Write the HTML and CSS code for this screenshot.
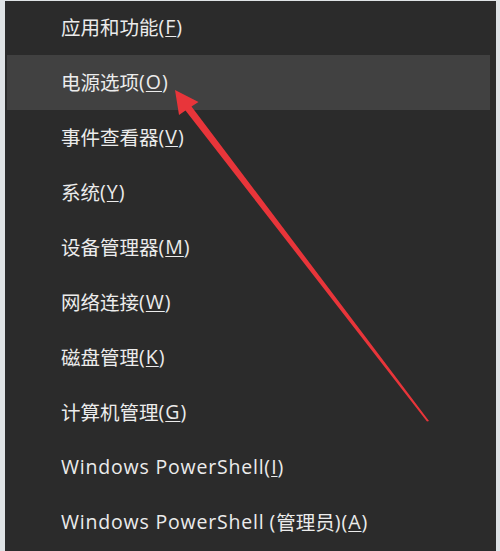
FILE: index.html
```html
<!DOCTYPE html>
<html lang="zh-CN">
<head>
<meta charset="utf-8">
<link rel="stylesheet" href="styles.css">
</head>
<body>
<div class="frame">
  <ul class="menu">
    <li class="item first">应用和功能<span class="k">(<u>F</u>)</span></li>
    <li class="item active">电源选项<span class="k">(<u>O</u>)</span></li>
    <li class="item">事件查看器<span class="k">(<u>V</u>)</span></li>
    <li class="item">系统<span class="k">(<u>Y</u>)</span></li>
    <li class="item">设备管理器<span class="k">(<u>M</u>)</span></li>
    <li class="item">网络连接<span class="k">(<u>W</u>)</span></li>
    <li class="item">磁盘管理<span class="k">(<u>K</u>)</span></li>
    <li class="item">计算机管理<span class="k">(<u>G</u>)</span></li>
    <li class="item"><span class="en">Windows PowerShell</span><span class="k">(<u>I</u>)</span></li>
    <li class="item"><span class="en">Windows PowerShell</span>&nbsp;<span class="k">(</span>管理员<span class="k">)(<u>A</u>)</span></li>
  </ul>
  <svg class="arrow" width="500" height="551" viewBox="0 0 500 551" xmlns="http://www.w3.org/2000/svg">
    <polygon points="175,90 198.5,102 191.5,106.5 429,421 427,421.5 185.5,110.5 179,115" fill="#e8353a"/>
  </svg>
</div>
</body>
</html>
```
FILE: styles.css
```css
html, body {
  margin: 0;
  padding: 0;
  background: #dfe3e6;
  width: 500px;
  height: 551px;
  overflow: hidden;
}
.frame {
  position: relative;
  width: 500px;
  height: 551px;
  padding: 1px 4px 0 5px;
  box-sizing: border-box;
}
.menu {
  list-style: none;
  margin: 0;
  padding: 0 6px 0 0;
  background: #2b2b2b;
  height: 550px;
  font-family: "Open Sans", "Noto Sans CJK SC", sans-serif;
  font-size: 19.5px;
  color: #ececec;
}
.item {
  height: 55px;
  display: flex;
  align-items: center;
  padding-left: 56px;
  padding-bottom: 3px;
  box-sizing: border-box;
  white-space: nowrap;
}
.item.first {
  height: 54px;
}
.en {
  letter-spacing: 0.8px;
}
.k {
  letter-spacing: 1px;
}
.item u {
  text-decoration-thickness: 1px;
  text-underline-offset: 2px;
}
.item.active {
  background: #414141;
  margin-left: 2px;
  padding-left: 54px;
}
.arrow {
  position: absolute;
  left: 0;
  top: 0;
  pointer-events: none;
}
```
